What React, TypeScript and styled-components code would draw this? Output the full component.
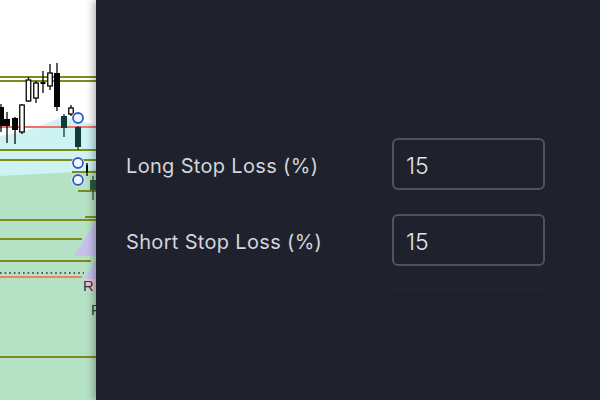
import React from "react";
import styled, { createGlobalStyle } from "styled-components";

const Global = createGlobalStyle`
  html, body { margin: 0; padding: 0; width: 600px; height: 400px; overflow: hidden; background: #1f222d; }
  #root { width: 600px; height: 400px; }
`;

const Page = styled.div`
  display: grid;
  grid-template-columns: 96px 1fr;
  width: 600px;
  height: 400px;
  overflow: hidden;
`;

const ChartPane = styled.div`
  background: #ffffff;
  height: 400px;
  overflow: hidden;
`;

const ChartSvg = styled.svg`
  display: block;
  filter: blur(0.3px);
`;

const ChartLabel = styled.text`
  font-family: "Liberation Sans", Arial, sans-serif;
  font-size: 15px;
  fill: #2d3a3a;
`;

const Panel = styled.section`
  display: flex;
  flex-direction: column;
  background: #1f222d;
  padding: 138px 55px 0 31px;
  box-shadow: -3px 0 7px rgba(0, 0, 0, 0.28);
  position: relative;
  font-family: Inter, "Liberation Sans", sans-serif;
`;

const Form = styled.form`
  display: flex;
  flex-direction: column;
  gap: 24px;
`;

const Row = styled.div`
  display: flex;
  align-items: center;
  justify-content: space-between;
  height: 52px;
`;

const Label = styled.label`
  margin-left: -1px;
  padding-top: 3px;
  font-size: 20px;
  font-weight: 400;
  color: #d3d5da;
  letter-spacing: 0.33px;
`;

const ValueInput = styled.input`
  box-sizing: border-box;
  width: 153px;
  height: 52px;
  padding: 3px 12px 0;
  background: #1f222d;
  border: 2px solid #50535d;
  border-radius: 6px;
  color: #e1e3e8;
  font-family: inherit;
  font-size: 23px;
  font-weight: 300;
  outline: none;
`;

const Divider = styled.div`
  height: 3px;
  margin: 22px 0 0 266px;
  background: #22252f;
`;

type Candle = { x: number; wt: number; wb: number; bt: number; bb: number; w?: number; hollow?: boolean; color?: string };

const candles: Candle[] = [
  { x: 1, wt: 104, wb: 132, bt: 107, bb: 126, w: 6 },
  { x: 7, wt: 112, wb: 143, bt: 119, bb: 126, w: 6 },
  { x: 15, wt: 117, wb: 144, bt: 118, bb: 130, w: 6 },
  { x: 22, wt: 104, wb: 134, bt: 105, bb: 132, w: 4.5, hollow: true },
  { x: 28.5, wt: 77, wb: 102, bt: 80, bb: 101, w: 4.5, hollow: true },
  { x: 36, wt: 81, wb: 103, bt: 83, bb: 98, w: 4.5, hollow: true },
  { x: 43, wt: 71, wb: 93, bt: 82, bb: 84, w: 5 },
  { x: 50, wt: 64, wb: 90, bt: 73, bb: 86, w: 4.5, hollow: true },
  { x: 57, wt: 63, wb: 111, bt: 73, bb: 107, w: 6 },
  { x: 64, wt: 114, wb: 137, bt: 116, bb: 128, w: 6, color: "#123a38" },
  { x: 71, wt: 105, wb: 116, bt: 108, bb: 114, w: 4.5, hollow: true },
  { x: 78, wt: 126, wb: 150, bt: 127, bb: 147, w: 6, color: "#123a38" },
  { x: 87, wt: 163, wb: 176, bt: 165, bb: 172, w: 2 },
  { x: 93, wt: 176, wb: 200, bt: 180, bb: 190, w: 6, color: "#2d5a48" },
];

const olive: [number, number, number][] = [
  [0, 96, 77], [0, 96, 81], [0, 96, 150], [0, 96, 160], [72, 96, 172], [78, 96, 191],
  [85, 96, 217], [0, 96, 220], [0, 82, 239], [0, 91, 261], [0, 96, 357],
];

const markers = [118, 163, 180];

function Chart() {
  return (
    <ChartSvg width="96" height="400" viewBox="0 0 96 400" aria-label="Price chart">
      <polygon points="0,136 25,131 63,117 96,125 96,180 0,180" fill="#cdf3f3" />
      <polygon points="0,176 75,172 96,170 96,400 0,400" fill="#b5e2c4" />
      <polygon points="96,221 74,256 96,256" fill="#c6c0ee" />
      <polygon points="96,260 84,279 96,279" fill="#c6c0ee" />
      <polygon points="84,279 96,279 96,291 88,290" fill="#f2c3d2" />
      {olive.map(([a, b, y]) => (
        <line key={`${a}-${y}`} x1={a} x2={b} y1={y} y2={y} stroke="#7d8a1c" strokeWidth="2" />
      ))}
      <line x1="0" x2="96" y1="127" y2="127" stroke="#f0706a" strokeWidth="2" />
      <line x1="0" x2="84" y1="273" y2="273" stroke="#1f3a2c" strokeWidth="1.6" strokeDasharray="1.6 3" />
      <line x1="0" x2="82" y1="277" y2="277" stroke="#ee8070" strokeWidth="2" />
      {candles.map((c) => {
        const w = c.w ?? 4;
        const color = c.color ?? "#050505";
        return (
          <g key={c.x}>
            <line x1={c.x} x2={c.x} y1={c.wt} y2={c.wb} stroke={color} strokeWidth="1.3" />
            <rect
              x={c.x - w / 2}
              y={c.bt}
              width={w}
              height={c.bb - c.bt}
              fill={c.hollow ? "#ffffff" : color}
              stroke={c.hollow ? "#050505" : "none"}
              strokeWidth="1.3"
            />
          </g>
        );
      })}
      {markers.map((y) => (
        <g key={y}>
          <circle cx="78" cy={y} r="6.5" fill="#ffffff" />
          <circle cx="78" cy={y} r="5" fill="#eef8fb" stroke="#3559c8" strokeWidth="1.8" />
        </g>
      ))}
      <ChartLabel x="83" y="291">R</ChartLabel>
      <ChartLabel x="91" y="315">R</ChartLabel>
    </ChartSvg>
  );
}

export default function App() {
  return (
    <Page>
      <Global />
      <ChartPane>
        <Chart />
      </ChartPane>
      <Panel>
        <Form>
          <Row>
            <Label htmlFor="long-sl">Long Stop Loss (%)</Label>
            <ValueInput id="long-sl" readOnly value="15" />
          </Row>
          <Row>
            <Label htmlFor="short-sl">Short Stop Loss (%)</Label>
            <ValueInput id="short-sl" readOnly value="15" />
          </Row>
        </Form>
        <Divider />
      </Panel>
    </Page>
  );
}
